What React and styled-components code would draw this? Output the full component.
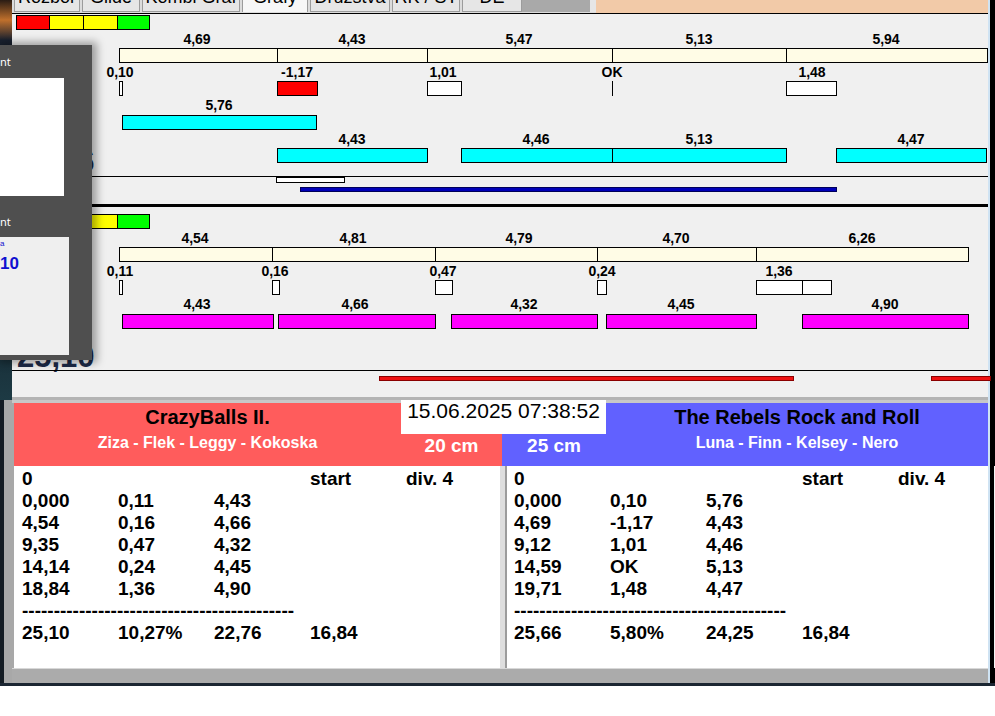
import React from "react";
import styled, { createGlobalStyle } from "styled-components";
import { ChevronUp, ChevronDown } from "lucide-react";

// page x where the main window content starts; chart data is in page coords
const X0 = 12;

const GlobalStyle = createGlobalStyle`
  html, body { margin: 0; padding: 0; background: #fff; }
  body { font-family: "Liberation Sans", Arial, sans-serif; }
`;

const Screen = styled.div`
  position: relative;
  width: 995px;
  height: 716px;
  overflow: hidden;
  background: #fff;
`;

const Window = styled.div`
  display: flex;
  height: 686px;
  box-sizing: border-box;
  border-bottom: 3px solid #1b2632;
`;

const DesktopEdge = styled.div`
  width: 12px;
  flex-shrink: 0;
  display: flex;
  flex-direction: column;
`;

const EdgeTop = styled.div`
  height: 400px;
  background: linear-gradient(180deg, #2a1c14 0px, #c0702c 20px, #1a2230 40px, #0f1822 60%, #1d3a44 100%);
`;

const EdgeFrame = styled.div`
  flex: 1;
  box-sizing: border-box;
  border-left: 4px solid #141c24;
  background: #a8a8a8;
`;

const RightEdge = styled.div`
  width: 7px;
  flex-shrink: 0;
  box-sizing: border-box;
  border-left: 2px solid #cfe3f3;
  background: #000;
`;

const Main = styled.div`
  width: 976px;
  display: flex;
  flex-direction: column;
`;

/* ---------- tab strip ---------- */

const TabStrip = styled.div`
  height: 13px;
  display: flex;
  gap: 2px;
  padding-left: 2px;
  background: #dcdcdc;
`;

const Tab = styled.div`
  width: ${(p) => p.$w}px;
  height: 12px;
  box-sizing: border-box;
  overflow: hidden;
  border: 1px solid #9c9c9c;
  border-top: none;
  border-bottom: ${(p) => (p.$active ? "none" : "1px solid #9c9c9c")};
  background: ${(p) => (p.$active ? "#f7f7f7" : "#e6e6e6")};
  font-size: 18px;
  text-align: center;
  color: #000;
`;

const TabText = styled.span`
  display: block;
  line-height: 20px;
  margin-top: -13px;
  white-space: nowrap;
`;

const GrayTab = styled.div`
  width: 68px;
  height: 12px;
  margin-left: -2px;
  background: #a9a9a9;
  border-right: 6px solid #e6e6e6;
`;

const Peach = styled.div`
  flex: 1;
  height: 13px;
  margin-left: -2px;
  background: #f2caa8;
`;

/* ---------- charts ---------- */

const Charts = styled.div`
  background: #f0f0f0;
  border-top: 1px solid #000;
`;

const Panel = styled.div`
  position: relative;
  padding-top: ${(p) => p.$padTop}px;
`;

const StripRow = styled.div`
  display: flex;
  height: 15px;
  padding-left: 5px;
`;

const StripCell = styled.div`
  width: ${(p) => p.$w}px;
  box-sizing: border-box;
  border: 1px solid #000;
  margin-left: -1px;
  background: ${(p) => p.$bg};
`;

const Row = styled.div`
  position: relative;
  height: ${(p) => p.$h}px;
`;

const Label = styled.span`
  position: absolute;
  top: 0;
  transform: translateX(-50%);
  font-size: 14px;
  font-weight: bold;
  line-height: 18px;
  color: #000;
  white-space: nowrap;
`;

const Bar = styled.div`
  position: absolute;
  top: 0;
  height: 100%;
  box-sizing: border-box;
  border: 1px solid #000;
  background: ${(p) => p.$bg};
`;

const TickLine = styled.div`
  position: absolute;
  top: 0;
  height: 100%;
  width: 1px;
  background: #000;
`;

const Spacer = styled.div`
  height: ${(p) => p.$h}px;
`;

const Lane = styled.div`
  position: relative;
  height: ${(p) => p.$h}px;
  box-sizing: border-box;
  border-top: 1px solid #000;
`;

const LaneBar = styled.div`
  position: absolute;
  top: ${(p) => p.$top}px;
  height: ${(p) => p.$h}px;
  box-sizing: border-box;
  border: 1px solid ${(p) => p.$line};
  background: ${(p) => p.$bg};
`;

const BigTotal = styled.div`
  position: absolute;
  left: 5px;
  top: ${(p) => p.$top}px;
  font-size: 31px;
  font-weight: bold;
  line-height: 31px;
  color: #1c2a48;
`;

const ThickLine = styled.div`
  height: 3px;
  background: #000;
`;

const PanelFoot = styled.div`
  height: 6px;
  background: linear-gradient(180deg, #b4b4b4 0, #b4b4b4 3px, #c8c8c8 3px);
`;

/* ---------- team headers ---------- */

const Teams = styled.div`
  position: relative;
  padding-left: 2px;
  background: #a8a8a8;
`;

const HeaderRow = styled.div`
  display: flex;
  height: 63px;
`;

const TeamHeader = styled.div`
  width: ${(p) => p.$w}px;
  display: flex;
  background: ${(p) => p.$bg};
`;

const TitleBlock = styled.div`
  flex: 1;
  padding-top: 2px;
  text-align: center;
`;

const TeamName = styled.div`
  font-size: 20px;
  font-weight: bold;
  line-height: 24px;
  color: #000;
`;

const Players = styled.div`
  margin-top: 4px;
  font-size: 16px;
  font-weight: bold;
  line-height: 20px;
  color: #fff;
`;

const CmBlock = styled.div`
  width: ${(p) => p.$w}px;
  padding-top: 32px;
  text-align: center;
  font-size: 19px;
  font-weight: bold;
  line-height: 22px;
  color: #fff;
`;

const DateBox = styled.div`
  position: absolute;
  left: 389px;
  top: -3px;
  width: 205px;
  height: 34px;
  background: #fff;
  text-align: center;
  font-size: 21px;
  line-height: 22px;
  color: #000;
`;

/* ---------- lists ---------- */

const ListRow = styled.div`
  display: flex;
  height: 202px;
`;

const List = styled.div`
  width: ${(p) => p.$w}px;
  display: flex;
  background: #fff;
`;

const ListBody = styled.div`
  flex: 1;
  padding: 2px 0 0 ${(p) => p.$pad}px;
`;

const Line = styled.div`
  display: grid;
  grid-template-columns: repeat(5, 96px);
  height: 22px;
  font-size: 19px;
  font-weight: bold;
  line-height: 22px;
  color: #000;
  white-space: nowrap;
`;

const DashLine = styled.div`
  height: 22px;
  font-size: 19px;
  font-weight: bold;
  line-height: 22px;
  white-space: nowrap;
  overflow: hidden;
  width: 272px;
`;

const Scroll = styled.div`
  width: 17px;
  display: flex;
  flex-direction: column;
  justify-content: space-between;
  align-items: center;
  padding: 6px 0 4px;
  box-sizing: border-box;
  background: #f4f4f4;
  color: #c8c8c8;
`;

const Splitter = styled.div`
  width: 7px;
  box-sizing: border-box;
  background: #dedede;
  border-right: 2px solid #9c9c9c;
`;

const StatusBar = styled.div`
  height: 15px;
  background: #ababab;
  border-top: 1px solid #d8d8d8;
  box-sizing: border-box;
`;

/* ---------- overlay (taskbar preview) ---------- */

const Overlay = styled.div`
  position: absolute;
  left: 0;
  top: 45px;
  width: 92px;
  height: 315px;
  background: #4f4f4f;
  box-shadow: 2px 0 8px 3px rgba(0, 0, 0, 0.35);
  display: flex;
  flex-direction: column;
`;

const PreviewCaption = styled.div`
  height: ${(p) => p.$h}px;
  padding-top: ${(p) => p.$pad}px;
  box-sizing: border-box;
  font-family: "Noto Sans", sans-serif;
  font-size: 11px;
  line-height: 12px;
  color: #fff;
`;

const PreviewBox = styled.div`
  width: ${(p) => p.$w}px;
  height: 118px;
  background: ${(p) => p.$bg};
  color: #1010d0;
`;

const PreviewSmall = styled.div`
  font-size: 8px;
  line-height: 10px;
  padding-top: 2px;
`;

const PreviewNum = styled.div`
  font-size: 17px;
  font-weight: bold;
  line-height: 20px;
  margin-top: 5px;
`;

/* ---------- data ---------- */

const segmentsFrom = (edges) =>
  edges.slice(1).map((to, i) => ({ from: edges[i], to }));

const strip = [
  ["#ff0000", 34],
  ["#ffff00", 35],
  ["#ffff00", 35],
  ["#00ff00", 33],
];

const blueTeam = {
  padTop: 1,
  total: "25,66",
  totalTop: 132,
  splits: [
    ["4,69", 197],
    ["4,43", 352],
    ["5,47", 519],
    ["5,13", 699],
    ["5,94", 886],
  ],
  splitEdges: [119, 277, 427, 612, 786, 987],
  reacts: [
    ["0,10", 120],
    ["-1,17", 297],
    ["1,01", 443],
    ["OK", 612],
    ["1,48", 812],
  ],
  reactBoxes: [
    { from: 119, to: 122, bg: "#fff" },
    { from: 277, to: 317, bg: "#ff0000" },
    { from: 427, to: 461, bg: "#fff" },
    { from: 612, to: 612, tick: true },
    { from: 786, to: 836, bg: "#fff" },
  ],
  // the blue team's first run sits on its own line
  runLines: [
    { labels: [["5,76", 219]], bars: [{ from: 122, to: 316 }], h: 19 },
    {
      labels: [
        ["4,43", 352],
        ["4,46", 536],
        ["5,13", 699],
        ["4,47", 911],
      ],
      bars: [
        { from: 277, to: 427 },
        { from: 461, to: 612 },
        { from: 612, to: 786 },
        { from: 836, to: 986 },
      ],
      h: 18,
    },
  ],
  runColor: "#00ffff",
  gap: 13,
  laneH: 28,
  lane: [
    { from: 276, to: 344, top: 0, h: 6, bg: "#fff", line: "#000" },
    { from: 300, to: 836, top: 10, h: 5, bg: "#0000b8", line: "#00005a" },
  ],
};

const redTeam = {
  padTop: 7,
  total: "25,10",
  totalTop: 134,
  splits: [
    ["4,54", 195],
    ["4,81", 353],
    ["4,79", 519],
    ["4,70", 676],
    ["6,26", 862],
  ],
  splitEdges: [119, 272, 435, 597, 756, 968],
  reacts: [
    ["0,11", 120],
    ["0,16", 275],
    ["0,47", 443],
    ["0,24", 602],
    ["1,36", 779],
  ],
  reactBoxes: [
    { from: 119, to: 122, bg: "#fff" },
    { from: 272, to: 279, bg: "#fff" },
    { from: 435, to: 452, bg: "#fff" },
    { from: 597, to: 606, bg: "#fff" },
    { from: 756, to: 802, bg: "#fff" },
    { from: 802, to: 831, bg: "#fff" },
  ],
  runLines: [
    {
      labels: [
        ["4,43", 197],
        ["4,66", 355],
        ["4,32", 524],
        ["4,45", 681],
        ["4,90", 885],
      ],
      bars: [
        { from: 122, to: 273 },
        { from: 278, to: 435 },
        { from: 451, to: 597 },
        { from: 606, to: 756 },
        { from: 802, to: 968 },
      ],
      h: 19,
    },
  ],
  runColor: "#ff00ff",
  gap: 41,
  laneH: 27,
  lane: [
    { from: 379, to: 793, top: 5, h: 5, bg: "#ee1111", line: "#8a0000" },
    { from: 931, to: 990, top: 5, h: 5, bg: "#ee1111", line: "#8a0000" },
  ],
};

const leftRows = [
  ["0", "", "", "start", "div. 4"],
  ["0,000", "0,11", "4,43"],
  ["4,54", "0,16", "4,66"],
  ["9,35", "0,47", "4,32"],
  ["14,14", "0,24", "4,45"],
  ["18,84", "1,36", "4,90"],
  "dash",
  ["25,10", "10,27%", "22,76", "16,84"],
];

const rightRows = [
  ["0", "", "", "start", "div. 4"],
  ["0,000", "0,10", "5,76"],
  ["4,69", "-1,17", "4,43"],
  ["9,12", "1,01", "4,46"],
  ["14,59", "OK", "5,13"],
  ["19,71", "1,48", "4,47"],
  "dash",
  ["25,66", "5,80%", "24,25", "16,84"],
];

const tabs = [
  ["Rozbor", 66],
  ["Glide", 58],
  ["Kombi Graf", 98],
  ["Grafy", 66, true],
  ["Družstva", 80],
  ["RK / ST", 68],
  ["DE", 60],
];

/* ---------- parts ---------- */

const place = (from, to) => ({ left: from - X0, width: to - from + 1 });

function Labels({ items, h = 18 }) {
  return (
    <Row $h={h}>
      {items.map(([text, x], i) => (
        <Label key={i} style={{ left: x - X0 }}>
          {text}
        </Label>
      ))}
    </Row>
  );
}

function Bars({ items, color }) {
  return (
    <Row $h={15}>
      {items.map((b, i) =>
        b.tick ? (
          <TickLine key={i} style={{ left: b.from - X0 }} />
        ) : (
          <Bar key={i} $bg={b.bg || color} style={place(b.from, b.to)} />
        )
      )}
    </Row>
  );
}

function Chart({ d }) {
  return (
    <Panel $padTop={d.padTop}>
      <BigTotal $top={d.totalTop}>{d.total}</BigTotal>
      <StripRow>
        {strip.map(([bg, w], i) => (
          <StripCell key={i} $bg={bg} $w={w} />
        ))}
      </StripRow>
      <Labels items={d.splits} />
      <Bars items={segmentsFrom(d.splitEdges)} color="#fffce6" />
      <Labels items={d.reacts} />
      <Bars items={d.reactBoxes} />
      {d.runLines.map((line, i) => (
        <React.Fragment key={i}>
          <Labels items={line.labels} h={line.h} />
          <Bars items={line.bars} color={d.runColor} />
        </React.Fragment>
      ))}
      <Spacer $h={d.gap} />
      <Lane $h={d.laneH}>
        {d.lane.map((b, i) => (
          <LaneBar
            key={i}
            $top={b.top}
            $h={b.h}
            $bg={b.bg}
            $line={b.line}
            style={place(b.from, b.to)}
          />
        ))}
      </Lane>
    </Panel>
  );
}

function ResultList({ rows, width, pad }) {
  return (
    <List $w={width}>
      <ListBody $pad={pad}>
        {rows.map((r, i) =>
          r === "dash" ? (
            <DashLine key={i}>{"-".repeat(44)}</DashLine>
          ) : (
            <Line key={i}>
              {r.map((c, j) => (
                <span key={j}>{c}</span>
              ))}
            </Line>
          )
        )}
      </ListBody>
      <Scroll>
        <ChevronUp size={11} strokeWidth={2} />
        <ChevronDown size={11} strokeWidth={2} />
      </Scroll>
    </List>
  );
}

export default function App() {
  return (
    <>
      <GlobalStyle />
      <Screen>
        <Window>
          <DesktopEdge>
            <EdgeTop />
            <EdgeFrame />
          </DesktopEdge>
          <Main>
            <TabStrip>
              {tabs.map(([t, w, active]) => (
                <Tab key={t} $w={w} $active={active}>
                  <TabText>{t}</TabText>
                </Tab>
              ))}
              <GrayTab />
              <Peach />
            </TabStrip>

            <Charts>
              <Chart d={blueTeam} />
              <ThickLine />
              <Chart d={redTeam} />
              <PanelFoot />
            </Charts>

            <Teams>
              <HeaderRow>
                <TeamHeader $w={488} $bg="#ff5c5c">
                  <TitleBlock>
                    <TeamName>CrazyBalls II.</TeamName>
                    <Players>Ziza - Flek - Leggy - Kokoska</Players>
                  </TitleBlock>
                  <CmBlock $w={101}>20 cm</CmBlock>
                </TeamHeader>
                <TeamHeader $w={486} $bg="#6161ff">
                  <CmBlock $w={104}>25 cm</CmBlock>
                  <TitleBlock>
                    <TeamName>The Rebels Rock and Roll</TeamName>
                    <Players>Luna - Finn - Kelsey - Nero</Players>
                  </TitleBlock>
                </TeamHeader>
              </HeaderRow>
              <DateBox>15.06.2025 07:38:52</DateBox>
              <ListRow>
                <ResultList rows={leftRows} width={486} pad={8} />
                <Splitter />
                <ResultList rows={rightRows} width={481} pad={7} />
              </ListRow>
            </Teams>

            <StatusBar />
          </Main>
          <RightEdge />
        </Window>

        <Overlay>
          <PreviewCaption $h={33} $pad={11}>nt</PreviewCaption>
          <PreviewBox $w={64} $bg="#fff" />
          <PreviewCaption $h={41} $pad={20}>nt</PreviewCaption>
          <PreviewBox $w={69} $bg="#efefef">
            <PreviewSmall>a</PreviewSmall>
            <PreviewNum>10</PreviewNum>
          </PreviewBox>
        </Overlay>
      </Screen>
    </>
  );
}
